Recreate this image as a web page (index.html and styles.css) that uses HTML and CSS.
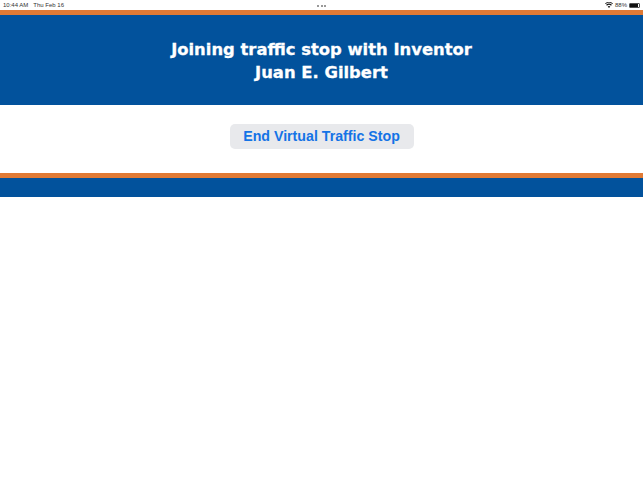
FILE: index.html
```html
<!DOCTYPE html>
<html lang="en">
<head>
  <meta charset="UTF-8">
  <meta name="viewport" content="width=device-width, initial-scale=1.0">
  <title>Virtual Traffic Stop</title>
  <link rel="stylesheet" href="styles.css">
</head>
<body>
  <!-- Status bar -->
  <div class="status-bar">
    <div class="status-left">
      <span>10:44 AM</span>
      <span>Thu Feb 16</span>
    </div>
    <div class="status-dots">
      <span class="dot"></span>
      <span class="dot"></span>
      <span class="dot"></span>
    </div>
    <div class="status-right">
      <svg class="wifi-icon" width="8" height="6" viewBox="0 0 16 12">
        <path d="M8 12 L5.4 9 A4 4 0 0 1 10.6 9 Z M3.9 7.3 L2.3 5.5 A8.6 8.6 0 0 1 13.7 5.5 L12.1 7.3 A6.2 6.2 0 0 0 3.9 7.3 Z M1.2 4.2 L0 2.9 A12 12 0 0 1 16 2.9 L14.8 4.2 A10.2 10.2 0 0 0 1.2 4.2 Z" fill="#111"/>
      </svg>
      <span>88%</span>
      <div class="battery">
        <div class="battery-level"></div>
      </div>
    </div>
  </div>

  <!-- Header -->
  <div class="header">
    <h1>Joining traffic stop with Inventor<br>Juan E. Gilbert</h1>
  </div>

  <!-- Action -->
  <div class="action-section">
    <button class="end-btn">End Virtual Traffic Stop</button>
  </div>

  <!-- Footer -->
  <div class="footer"></div>
</body>
</html>
```

FILE: styles.css
```css
/* General Styling */
body {
  margin: 0;
  padding: 0;
  background-color: #ffffff;
  font-family: 'Liberation Sans', Arial, sans-serif;
}

/* Status bar */
.status-bar {
  display: flex;
  justify-content: space-between;
  align-items: center;
  height: 10px;
  padding: 0 3px;
  font-size: 6px;
  color: #333;
  position: relative;
}

.status-left {
  display: flex;
  gap: 5px;
}

.status-dots {
  display: flex;
  gap: 1.5px;
  position: absolute;
  left: 317px;
  top: 5px;
}

.dot {
  width: 2px;
  height: 2px;
  border-radius: 50%;
  background-color: #777;
}

.status-right {
  display: flex;
  align-items: center;
  gap: 2px;
}

.battery {
  width: 11px;
  height: 5px;
  border: 0.5px solid #555;
  border-radius: 1px;
  box-sizing: border-box;
}

.battery-level {
  width: 88%;
  height: 100%;
  background-color: #111;
}

/* Header */
.header {
  background-color: #02529c;
  border-top: 5px solid #e07a35;
  height: 90px;
  display: flex;
  align-items: center;
  justify-content: center;
}

.header h1 {
  margin: 0;
  padding-top: 2px;
  font-family: 'DejaVu Sans', sans-serif;
  font-size: 16.4px;
  font-weight: bold;
  line-height: 23px;
  -webkit-text-stroke: 0.3px #ffffff;
  color: #ffffff;
  text-align: center;
}

/* Action */
.action-section {
  height: 68px;
  display: flex;
  justify-content: center;
  padding-top: 19px;
  box-sizing: border-box;
}

.end-btn {
  width: 184px;
  height: 25px;
  padding: 0 0 2px;
  border: none;
  border-radius: 5px;
  background-color: #e8e9ec;
  color: #1473e6;
  font-family: 'Liberation Sans', Arial, sans-serif;
  font-size: 14.2px;
  font-weight: bold;
}

/* Footer */
.footer {
  background-color: #02529c;
  border-top: 5px solid #e07a35;
  height: 19px;
}
```
